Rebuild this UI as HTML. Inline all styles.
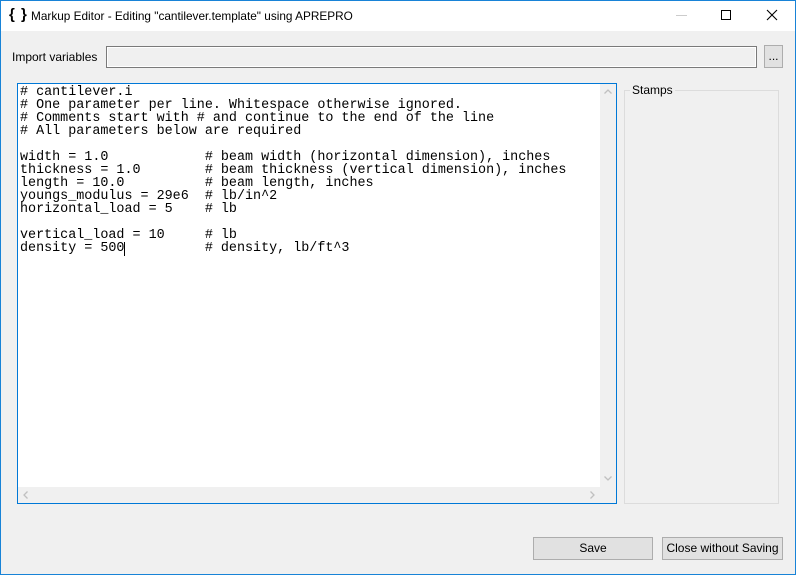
<!DOCTYPE html>
<html><head><style>
*{margin:0;padding:0;box-sizing:border-box}
body{width:796px;height:575px;overflow:hidden;background:#f0f0f0;font-family:"Liberation Sans",sans-serif;font-size:12px;color:#000;position:relative}
.win{position:absolute;left:0;top:0;width:796px;height:575px;border:1px solid #1883d7}
.title{position:absolute;left:1px;top:1px;width:794px;height:30px;background:#fff}
.abs{position:absolute}
pre{position:absolute;left:20px;top:86px;font-family:"Liberation Mono","DejaVu Sans Mono",monospace;font-size:13.4px;line-height:13px;color:#000}
.btn{position:absolute;background:#e1e1e1;border:1px solid #adadad;text-align:center;line-height:20px;font-size:12px}
</style></head><body>
<div class="win"></div>
<div class="title"></div>
<div class="abs" style="left:9px;top:6px;font-size:15px;font-weight:bold;letter-spacing:1px">{ }</div>
<div class="abs" style="left:31px;top:9px;font-size:11.8px">Markup Editor - Editing "cantilever.template" using APREPRO</div>
<div class="abs" style="left:676px;top:15px;width:11px;height:1px;background:#ccc"></div>
<div class="abs" style="left:721px;top:10px;width:10px;height:10px;border:1px solid #000"></div>
<svg class="abs" style="left:766px;top:9px" width="12" height="12"><path d="M1 1L11 11M11 1L1 11" stroke="#000" stroke-width="1.1"/></svg>
<div class="abs" style="left:12px;top:50px">Import variables</div>
<div class="abs" style="left:106px;top:46px;width:651px;height:22px;border:1px solid #7a7a7a;background:#f0f0f0;box-shadow:inset 0 0 0 1px #fff"></div>
<div class="btn" style="left:764px;top:45px;width:19px;height:23px;line-height:20px">...</div>
<div class="abs" style="left:17px;top:83px;width:600px;height:421px;border:1px solid #0078d7;background:#fff"></div>
<div class="abs" style="left:600px;top:84px;width:16px;height:419px;background:#f0f0f0"></div>
<div class="abs" style="left:18px;top:487px;width:598px;height:16px;background:#f0f0f0"></div>
<svg class="abs" style="left:600px;top:84px" width="16" height="16"><path d="M4.5 9.5L8 6L11.5 9.5" stroke="#c0c0c0" fill="none" stroke-width="1.3"/></svg>
<svg class="abs" style="left:600px;top:470px" width="16" height="16"><path d="M4.5 6.5L8 10L11.5 6.5" stroke="#c0c0c0" fill="none" stroke-width="1.3"/></svg>
<svg class="abs" style="left:18px;top:487px" width="16" height="16"><path d="M9.5 4.5L6 8L9.5 11.5" stroke="#c0c0c0" fill="none" stroke-width="1.3"/></svg>
<svg class="abs" style="left:584px;top:487px" width="16" height="16"><path d="M6.5 4.5L10 8L6.5 11.5" stroke="#c0c0c0" fill="none" stroke-width="1.3"/></svg>
<pre># cantilever.i
# One parameter per line. Whitespace otherwise ignored.
# Comments start with # and continue to the end of the line
# All parameters below are required

width = 1.0            # beam width (horizontal dimension), inches
thickness = 1.0        # beam thickness (vertical dimension), inches
length = 10.0          # beam length, inches
youngs_modulus = 29e6  # lb/in^2
horizontal_load = 5    # lb

vertical_load = 10     # lb
density = 500          # density, lb/ft^3</pre>
<div class="abs" style="left:124px;top:242px;width:1px;height:14px;background:#000"></div>
<div class="abs" style="left:624px;top:90px;width:155px;height:414px;border:1px solid #dcdcdc"></div>
<div class="abs" style="left:630px;top:83px;background:#f0f0f0;padding:0 2px">Stamps</div>
<div class="btn" style="left:533px;top:537px;width:120px;height:23px">Save</div>
<div class="btn" style="left:662px;top:537px;width:121px;height:23px">Close without Saving</div>
</body></html>
